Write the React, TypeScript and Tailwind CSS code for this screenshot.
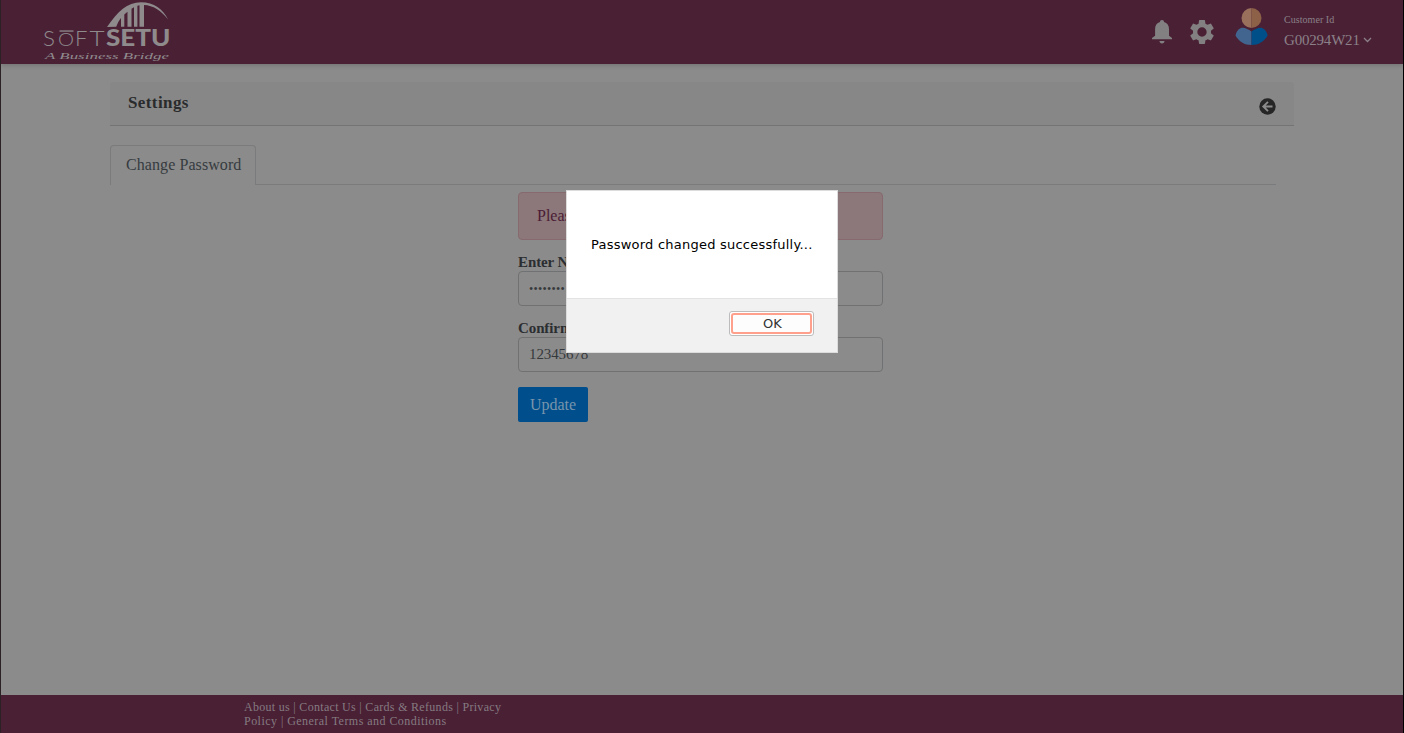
import type { ReactNode } from "react";

function Logo() {
  return (
    <svg width="136" height="64" viewBox="0 0 136 64" className="block" fill="#8f8b8d">
      <path d="M67 27C78 11 87 2.2 101 2.2c13 0 22 7 27 17.2-7-9-15-14-24-14.4V26.8h-4.500V5.200L97.400 5.800V26.800H94V7.200l-2.500 1.500V26.800H87.500V11.800l-3.200 2.600V26.800H81V18c-2 2.500-3.600 5.500-4.800 8.800Z" />
      <g fontFamily="Lato, sans-serif">
        <g fontWeight="300" fontSize="22">
          <text x="3" y="46" textLength="12" lengthAdjust="spacingAndGlyphs">S</text>
          <text x="18" y="46" fontSize="17" textLength="16" lengthAdjust="spacingAndGlyphs">O</text>
          <text x="35" y="46">F</text>
          <text x="49.500" y="46" textLength="15" lengthAdjust="spacingAndGlyphs">T</text>
        </g>
        <text x="66" y="46" fontWeight="900" fontSize="22" textLength="64.500" lengthAdjust="spacingAndGlyphs">SETU</text>
      </g>
      <path d="M19.500 30.400h14v1.300h-14z" />
      <text x="5" y="59" fontFamily="Liberation Serif, serif" fontStyle="italic" fontSize="8.500" textLength="124" lengthAdjust="spacingAndGlyphs">A Business Bridge</text>
    </svg>
  );
}

function BellIcon() {
  return (
    <svg width="20" height="24" viewBox="0 0 20 24" fill="#828081">
      <path d="M10 0C8.700 0 8 .9 8 2C4.700 2.800 3.100 5.500 3.100 9v6.800L0 18v1.300h20V18l-3-2.200V9c0-3.500-1.700-6.200-5-7C12 .9 11.300 0 10 0ZM7.500 21h5c0 1.500-1 2.400-2.500 2.400S7.500 22.500 7.500 21Z" />
    </svg>
  );
}

function GearIcon() {
  return (
    <svg width="24" height="24" viewBox="2 2 20 20" fill="#828081">
      <path d="M19.430 12.980c.04-.32.070-.64.070-.98s-.03-.66-.07-.98l2.110-1.650c.19-.15.240-.42.120-.64l-2-3.460c-.12-.22-.39-.3-.61-.22l-2.490 1c-.52-.4-1.080-.73-1.690-.98l-.38-2.650C14.460 2.180 14.250 2 14 2h-4c-.25 0-.46.180-.49.420l-.38 2.650c-.61.250-1.170.590-1.690.980l-2.490-1c-.23-.09-.49 0-.61.220l-2 3.460c-.13.220-.07.490.120.640l2.110 1.650c-.04.320-.07.650-.07.980s.03.660.070.980l-2.110 1.650c-.19.150-.24.420-.12.640l2 3.460c.12.220.390.300.610.220l2.490-1c.52.400 1.080.730 1.690.980l.38 2.650c.03.240.240.420.490.420h4c.25 0 .46-.18.490-.42l.38-2.650c.61-.25 1.170-.59 1.690-.98l2.490 1c.23.090.49 0 .61-.22l2-3.460c.12-.22.070-.49-.12-.64l-2.110-1.650ZM12 15.900a3.900 3.900 0 1 1 0-7.800 3.900 3.900 0 0 1 0 7.800Z" />
    </svg>
  );
}

function Avatar() {
  return (
    <svg width="34" height="38" viewBox="0 0 34 38">
      <path d="M16.500 0a10 10 0 0 0 0 20Z" fill="#98705b" />
      <path d="M16.500 0a10 10 0 0 1 0 20Z" fill="#8d6048" />
      <path d="M16.500 23.500C13 21 8.500 18.800 5.500 20.200C3 21.300 1.200 24 .5 27.500C4 33.700 9.500 37 16.500 37Z" fill="#42658f" />
      <path d="M16.500 23.500C20 21 24.500 18.800 27.500 20.200C30 21.300 32 24 32.700 27.500C29 33.700 23.500 37 16.500 37Z" fill="#004f88" />
    </svg>
  );
}

function Field({ label, children }: { label: string; children: ReactNode }) {
  return (
    <div>
      <div className="h-[17px] text-[15px] leading-[17px] font-bold tracking-[-0.1px] whitespace-nowrap text-[#2b2e31]">{label}</div>
      <div className="flex h-[35px] items-center rounded-[4px] border border-[#707172] px-[10px] text-[#36393c]">{children}</div>
    </div>
  );
}

export default function App() {
  return (
    <div className="relative flex h-[733px] w-[1404px] flex-col overflow-hidden border-r border-l border-r-black border-l-[#2c2226] bg-[#8b8b8b] font-['Liberation_Serif',serif]">
      <header className="flex h-16 shrink-0 items-start bg-[#4a2035] pl-[39px] shadow-[0_1px_5px_rgba(0,0,0,0.2)]">
        <Logo />
        <div className="mt-5 ml-[976px] w-5"><BellIcon /></div>
        <div className="mt-5 ml-[18px] w-6"><GearIcon /></div>
        <div className="mt-2 ml-[21px] w-[34px]"><Avatar /></div>
        <div className="mt-[14px] ml-[15px] whitespace-nowrap text-[#8b8088]">
          <div className="text-[10px] leading-3 tracking-[0.05px]">Customer Id</div>
          <div className="mt-[5px] flex items-center text-[15px] leading-[18px]">
            <span className="w-[75px] tracking-[-0.2px]">G00294W21</span>
            <svg className="ml-1" width="9" height="7" viewBox="0 0 9 7" fill="none" stroke="#8b8088" strokeWidth="1.300"><path d="M1 1l3.500 3.500L8 1" /></svg>
          </div>
        </div>
      </header>

      <main className="flex-1 pt-[18px] pr-[109px] pl-[109px]">
        <div className="flex h-11 items-center justify-between rounded-t-[4px] border-b border-[#747474] bg-[#878787] pr-[18px] pl-[18px]">
          <h1 className="-mt-px text-[17px] font-bold tracking-[0.4px] text-[#2a2b2c]">Settings</h1>
          <svg className="mt-[5px]" width="17" height="17" viewBox="0 0 17 17">
            <circle cx="8.500" cy="8.500" r="8.200" fill="#262626" />
            <path d="M13.500 8.500H4.500M9 3.800L4.300 8.500l4.700 4.700" fill="none" stroke="#8b8b8b" strokeWidth="1.900" />
          </svg>
        </div>
        <div className="mt-[19px] mr-[18px] flex h-10 border-b border-[#7a7b7c]">
          <div className="h-10 w-[146px] rounded-t-[4px] border border-b-0 border-[#7a7b7c] bg-[#8b8b8b] pt-[7px] pl-[15px] text-[16px] leading-6 tracking-[0.08px] whitespace-nowrap text-[#363b40]">Change Password</div>
        </div>
        <div className="mt-[7px] ml-[408px] w-[365px] text-[15px]">
          <div className="mb-[14px] flex h-12 items-center rounded-[4px] border border-[#866a6e] bg-[#8c777a] pl-[18px] text-[16px] text-[#4b1c35]">Please</div>
          <div className="flex flex-col gap-[14px]">
            <Field label="Enter New Password"><span className="text-[12px] tracking-[0.3px]">••••••••</span></Field>
            <Field label="Confirm Password"><span className="tracking-[-0.1px]">12345678</span></Field>
          </div>
          <button className="mt-[15px] block h-[35px] w-[70px] rounded-[2px] bg-[#004f8c] text-[16px] leading-[33px] text-[#7894ab]">Update</button>
        </div>
      </main>

      <footer className="h-[38px] shrink-0 bg-[#4a2035] pt-[5px] pl-[243px] text-[12px] leading-[14px] whitespace-nowrap text-[#857b81]">
        <div className="tracking-[0.3px]">About us | Contact Us | Cards &amp; Refunds | Privacy</div>
        <div className="tracking-[0.46px]">Policy | General Terms and Conditions</div>
      </footer>

      <div role="dialog" className="absolute top-[190px] left-[565px] flex h-[163px] w-[272px] flex-col border border-[#dcdcdc] bg-white font-['DejaVu_Sans',sans-serif] text-black">
        <div className="flex h-[107px] items-center pl-6 text-[13px] tracking-[0.23px] whitespace-nowrap">Password changed successfully...</div>
        <div className="flex flex-1 justify-end border-t border-[#e3e3e3] bg-[#f1f1f1] pt-3 pr-[23px]">
          <button className="h-[25px] w-[85px] rounded-[3px] border border-[#bcbcbc] bg-white p-px">
            <span className="flex h-full items-center justify-center rounded-[3px] border-2 border-[#ffa08c] bg-[#fdfdfd] pl-0.5 text-[13px] leading-none text-[#333]">OK</span>
          </button>
        </div>
      </div>
    </div>
  );
}
